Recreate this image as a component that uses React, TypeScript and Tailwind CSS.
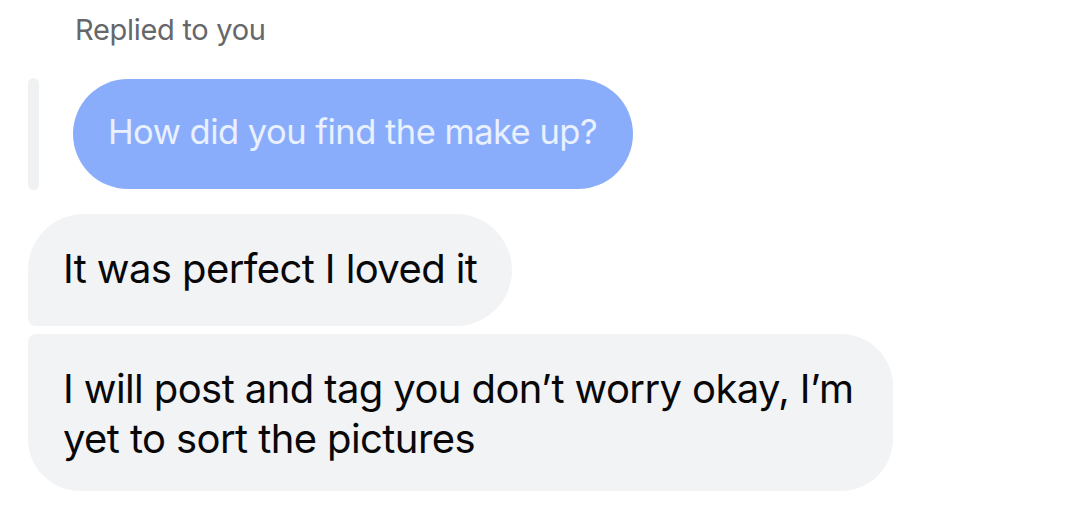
export default function App() {
  const font = { fontFamily: 'Inter, "Noto Sans", sans-serif' };
  return (
    <div className="w-[1080px] h-[509px] bg-white overflow-hidden" style={font}>
      <div className="pl-[75px] pt-[12px] h-[48px] text-[29px] leading-[36px] text-[#65676b] tracking-[-0.01em]">
        Replied to you
      </div>
      <div className="flex items-center mt-[30px] pl-[28px]">
        <div className="w-[11px] h-[112px] rounded-full bg-[#f0f1f3]" />
        <div className="ml-[34px] h-[110px] w-[560px] flex items-center pl-[35px] pb-[5px] rounded-full bg-[#8aadfb] text-[#e9f0ff] text-[34.5px] tracking-[-0.015em]">
          How did you find the make up?
        </div>
      </div>
      <div className="pl-[28px] mt-[24px] flex flex-col gap-[8px]">
        <div className="w-[484px] h-[112px] pt-[30px] pl-[35px] rounded-tl-[56px] rounded-r-[56px] rounded-bl-[8px] bg-[#f2f3f5] text-[#080809] text-[40px] leading-[50px] tracking-[-0.015em] whitespace-nowrap">
          It was perfect I loved it
        </div>
        <div className="w-[865px] pt-[30px] pb-[27px] pl-[35px] rounded-tl-[8px] rounded-tr-[52px] rounded-b-[52px] bg-[#f2f3f5] text-[#080809] text-[40px] leading-[50px] tracking-[-0.015em] whitespace-nowrap">
          I will post and tag you don’t worry okay, I’m
          <br />
          yet to sort the pictures
        </div>
      </div>
    </div>
  );
}
